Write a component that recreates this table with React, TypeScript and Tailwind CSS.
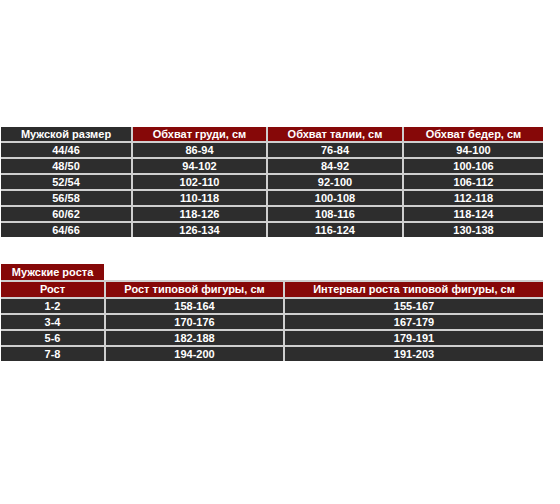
const sizeRows = [
  ["44/46", "86-94", "76-84", "94-100"],
  ["48/50", "94-102", "84-92", "100-106"],
  ["52/54", "102-110", "92-100", "106-112"],
  ["56/58", "110-118", "100-108", "112-118"],
  ["60/62", "118-126", "108-116", "118-124"],
  ["64/66", "126-134", "116-124", "130-138"],
];

const heightRows = [
  ["1-2", "158-164", "155-167"],
  ["3-4", "170-176", "167-179"],
  ["5-6", "182-188", "179-191"],
  ["7-8", "194-200", "191-203"],
];

const cell = "h-[14px] flex items-center justify-center leading-none";
const dark = "bg-[#2d2d2d]";
const red = "bg-[#860808]";

export default function App() {
  return (
    <div className="w-[560px] h-[504px] bg-white font-['Liberation_Sans',Arial,sans-serif] text-[11px] font-bold text-white">
      <div className="pt-[127px] pl-px">
        {/* Sizes */}
        <div className="grid grid-cols-[130px_133px_134px_139px] gap-[2px] w-[542px] bg-[#cfcfcf]">
          <div className={`${cell} ${dark}`}>Мужской размер</div>
          <div className={`${cell} ${red}`}>Обхват груди, см</div>
          <div className={`${cell} ${red}`}>Обхват талии, см</div>
          <div className={`${cell} ${red}`}>Обхват бедер, см</div>
          {sizeRows.map((r) =>
            r.map((v, i) => (
              <div key={r[0] + i} className={`${cell} ${dark}`}>
                {v}
              </div>
            ))
          )}
        </div>

        {/* Heights */}
        <div className="mt-[27px]">
          <div className={`${red} w-[103px] h-[16px] flex items-center justify-center leading-none`}>Мужские роста</div>
          <div className="grid grid-cols-[103px_177px_258px] gap-[2px] w-[542px] bg-[#cfcfcf] border-t-2 border-[#cfcfcf]">
            <div className={`${cell} ${red} h-[15px]`}>Рост</div>
            <div className={`${cell} ${red} h-[15px]`}>Рост типовой фигуры, см</div>
            <div className={`${cell} ${red} h-[15px]`}>Интервал роста типовой фигуры, см</div>
            {heightRows.map((r) =>
              r.map((v, i) => (
                <div key={r[0] + i} className={`${cell} ${dark}`}>
                  {v}
                </div>
              ))
            )}
          </div>
        </div>
      </div>
    </div>
  );
}
